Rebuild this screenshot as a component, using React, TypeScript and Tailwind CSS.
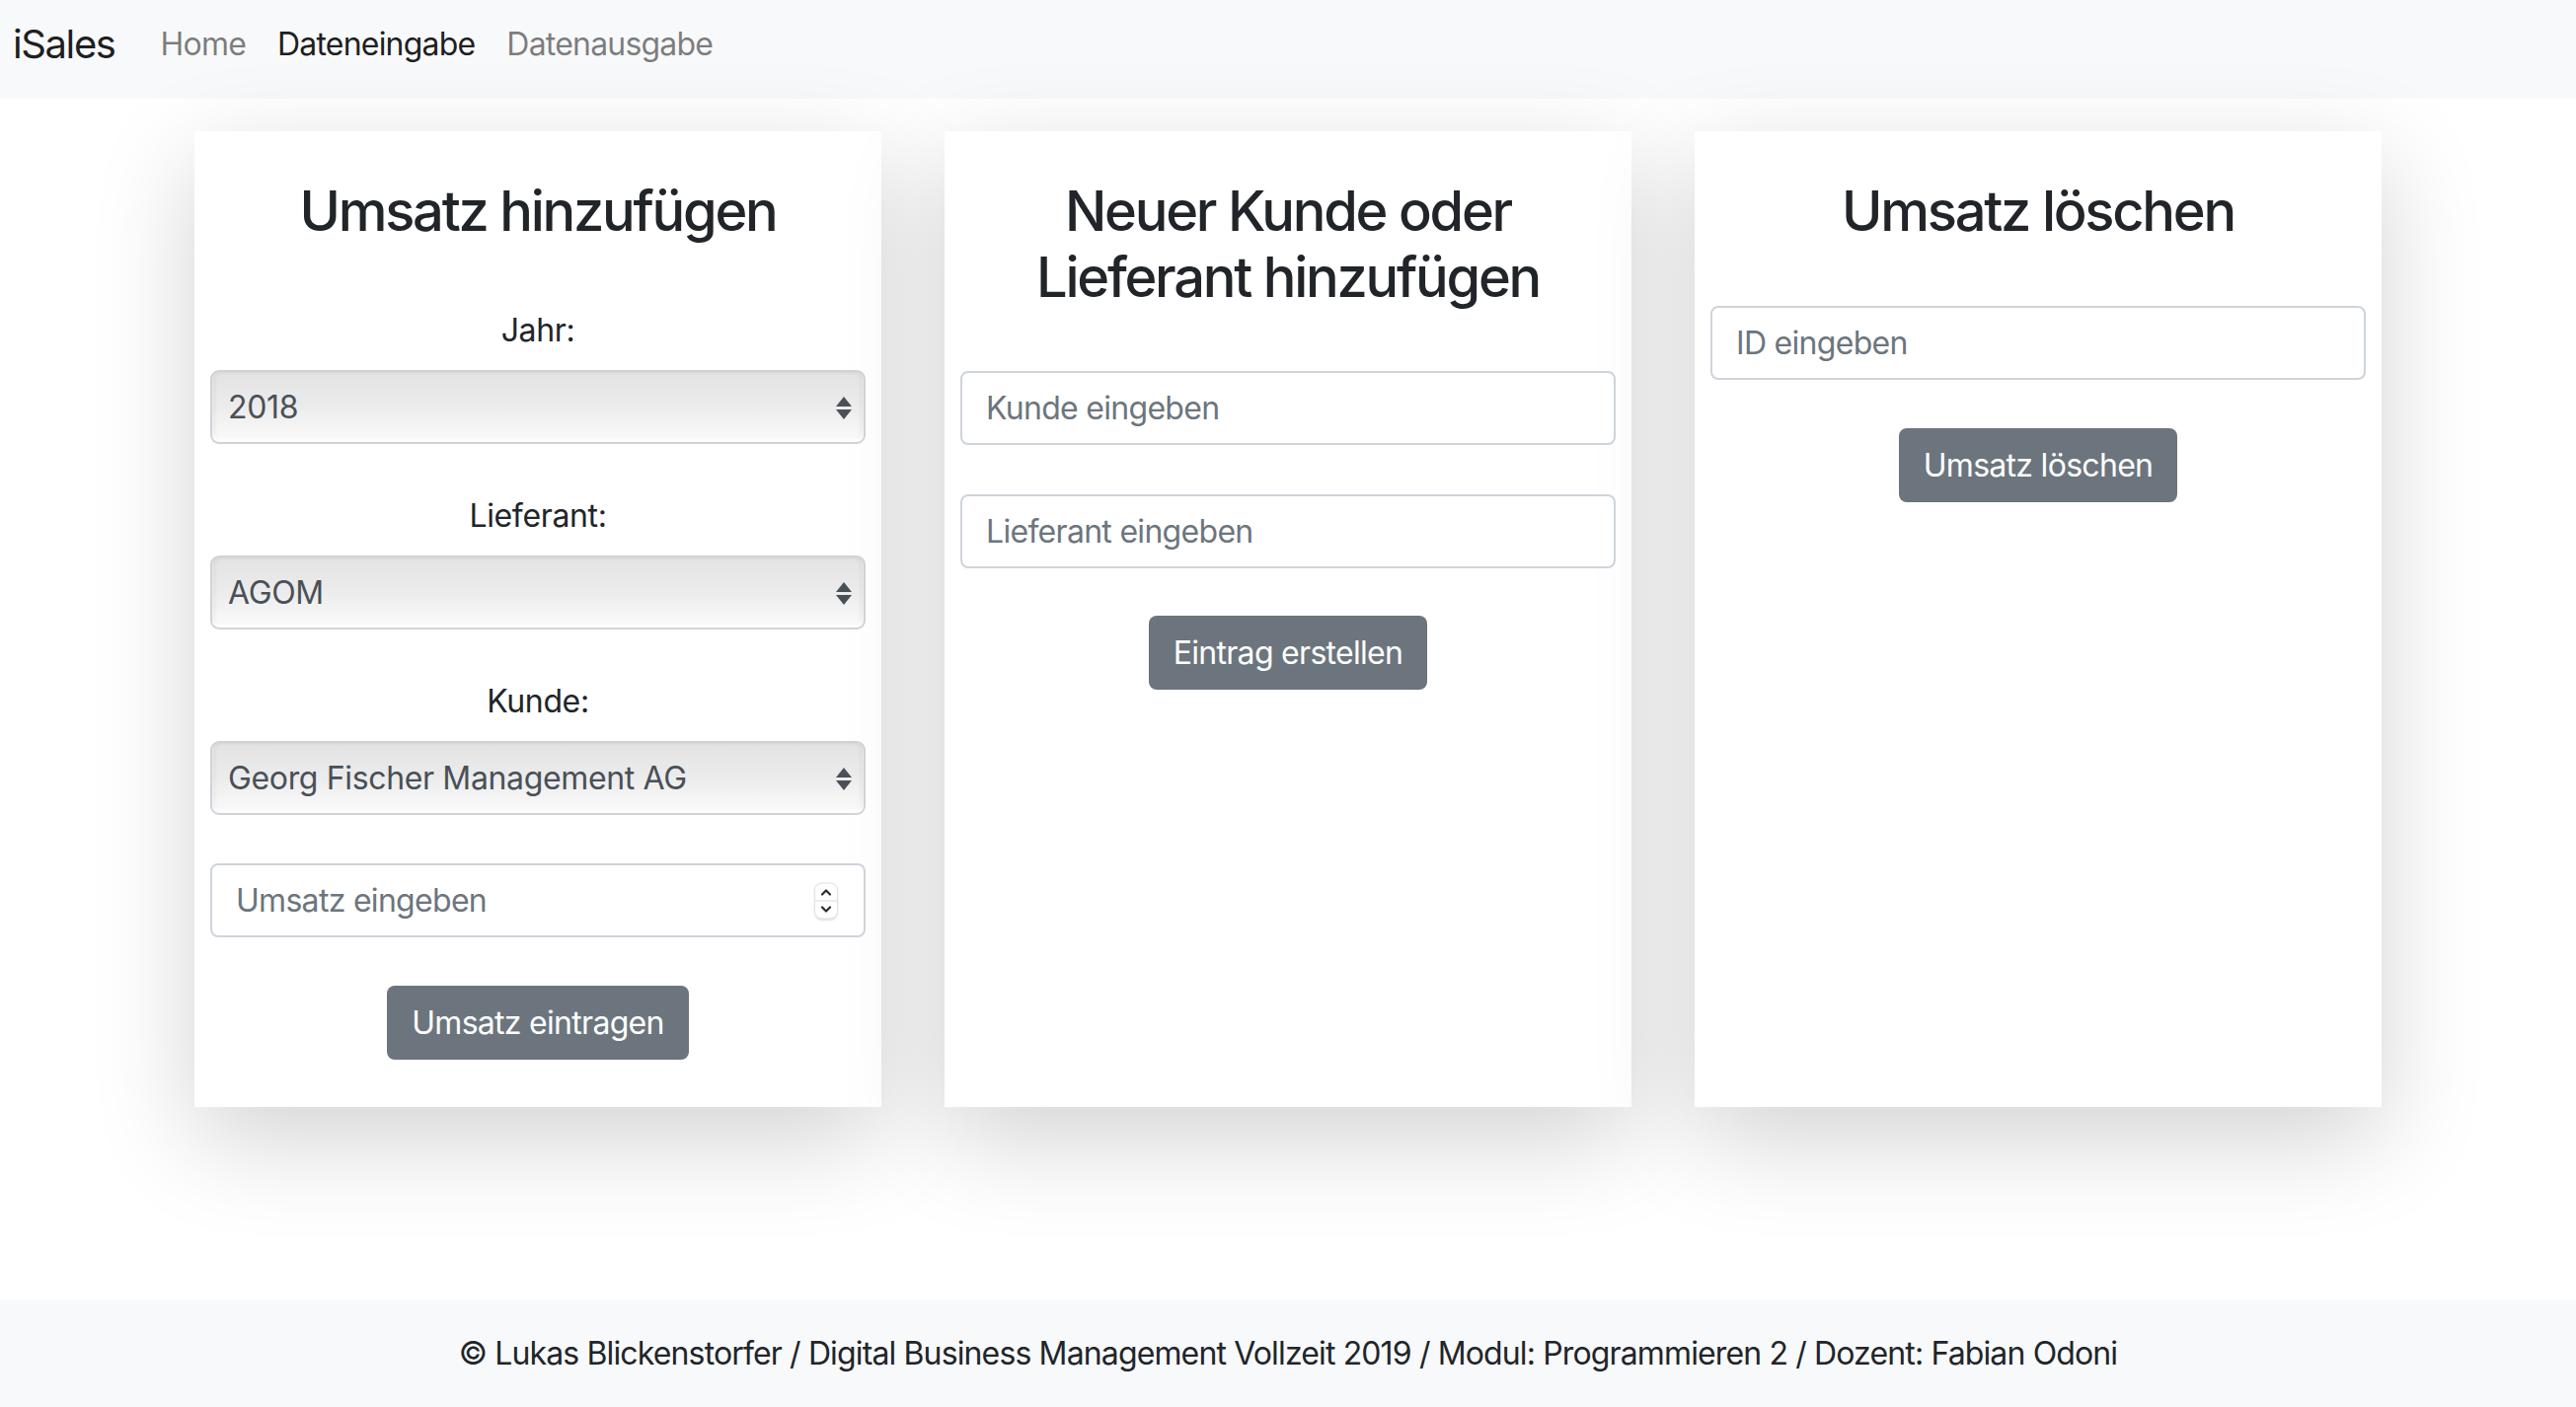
import React from "react";

const font = { fontFamily: "Inter, 'Noto Sans', 'Liberation Sans', sans-serif" };

function SelectBox({ value }: { value: string }) {
  return (
    <div className="relative h-[75px] w-full rounded-[9px] border-2 border-[#cfd3d8] bg-gradient-to-b from-[#e3e3e3] via-[#ececec] to-[#fbfbfb] shadow-[inset_0_-3px_3px_rgba(255,255,255,0.9),inset_3px_0_4px_rgba(0,0,0,0.05),inset_-3px_0_4px_rgba(0,0,0,0.05)] flex items-center pl-[16px] text-[32px] text-[#495057]">
      <span>{value}</span>
      <svg className="absolute right-[11px] top-1/2 -translate-y-1/2" width="18" height="32" viewBox="0 0 18 32">
        <path d="M9 5 L17 15 L1 15 Z" fill="#4b5057" />
        <path d="M1 18 L17 18 L9 28 Z" fill="#4b5057" />
      </svg>
    </div>
  );
}

function TextInput({ placeholder, spinner }: { placeholder: string; spinner?: boolean }) {
  return (
    <div className="relative w-full">
      <input
        type="text"
        placeholder={placeholder}
        className="block h-[75px] w-full rounded-[8px] border-2 border-[#ced4da] bg-white px-[24px] text-[32px] tracking-[-0.022em] text-[#495057] placeholder:text-[#6c757d] outline-none"
        style={font}
      />
      {spinner && (
        <div className="absolute right-[28px] top-1/2 flex h-[37px] w-[24px] -translate-y-1/2 flex-col items-center justify-between rounded-[8px] border border-[#e2e2e2] bg-white shadow-[0_1px_2px_rgba(0,0,0,0.12)]">
          <svg width="14" height="17" viewBox="0 0 14 17">
            <path d="M3 11 L7 7 L11 11" stroke="#2b2b2b" strokeWidth="2.2" fill="none" strokeLinecap="round" strokeLinejoin="round" />
          </svg>
          <div className="h-px w-full bg-[#dcdcdc]" />
          <svg width="14" height="17" viewBox="0 0 14 17">
            <path d="M3 6 L7 10 L11 6" stroke="#2b2b2b" strokeWidth="2.2" fill="none" strokeLinecap="round" strokeLinejoin="round" />
          </svg>
        </div>
      )}
    </div>
  );
}

function Btn({ children }: { children: React.ReactNode }) {
  return (
    <button className="h-[75px] rounded-[8px] bg-[#6c757d] px-[25px] text-[32px] tracking-[-0.022em] text-white" style={font}>
      {children}
    </button>
  );
}

function Label({ children }: { children: React.ReactNode }) {
  return <div className="mb-[16px] text-center text-[32px] leading-[48px] text-[#212529]">{children}</div>;
}

const cardCls =
  "flex h-full flex-col items-center bg-white px-[16px] pt-[48px] pb-[48px] shadow-[0_32px_96px_rgba(0,0,0,0.175)]";
const titleCls = "text-center text-[56px] font-medium leading-[67px] tracking-[-0.04em] text-[#212529]";

export default function App() {
  return (
    <div className="flex h-[1426px] w-full flex-col overflow-hidden bg-white tracking-[-0.022em]" style={font}>
      <nav className="flex h-[100px] shrink-0 items-center bg-[#f8f9fa] pl-[13px] pb-[10px]">
        <span className="mr-[46px] text-[40px] leading-[60px] tracking-[-0.035em] text-[rgba(0,0,0,0.9)]">iSales</span>
        <span className="mr-[32px] text-[32px] tracking-[-0.025em] text-[rgba(0,0,0,0.5)]">Home</span>
        <span className="mr-[32px] text-[32px] tracking-[-0.025em] text-[rgba(0,0,0,0.9)]">Dateneingabe</span>
        <span className="text-[32px] tracking-[-0.025em] text-[rgba(0,0,0,0.5)]">Datenausgabe</span>
      </nav>

      <main className="flex-1">
        <div className="mx-auto mt-[33px] flex w-[2280px]">
          <div className="w-[760px] px-[32px]">
            <div className={cardCls}>
              <h3 className={`mb-[63px] ${titleCls}`}>Umsatz hinzufügen</h3>
              <div className="w-full">
                <Label>Jahr:</Label>
                <SelectBox value="2018" />
              </div>
              <div className="mt-[49px] w-full">
                <Label>Lieferant:</Label>
                <SelectBox value="AGOM" />
              </div>
              <div className="mt-[49px] w-full">
                <Label>Kunde:</Label>
                <SelectBox value="Georg Fischer Management AG" />
              </div>
              <div className="mt-[49px] w-full">
                <TextInput placeholder="Umsatz eingeben" spinner />
              </div>
              <div className="mt-[49px]">
                <Btn>Umsatz eintragen</Btn>
              </div>
            </div>
          </div>

          <div className="w-[760px] px-[32px]">
            <div className={cardCls}>
              <h3 className={`mb-[61px] ${titleCls}`}>
                Neuer Kunde oder
                <br />
                Lieferant hinzufügen
              </h3>
              <TextInput placeholder="Kunde eingeben" />
              <div className="mt-[50px] w-full">
                <TextInput placeholder="Lieferant eingeben" />
              </div>
              <div className="mt-[48px]">
                <Btn>Eintrag erstellen</Btn>
              </div>
            </div>
          </div>

          <div className="w-[760px] px-[32px]">
            <div className={cardCls}>
              <h3 className={`mb-[62px] ${titleCls}`}>Umsatz löschen</h3>
              <TextInput placeholder="ID eingeben" />
              <div className="mt-[49px]">
                <Btn>Umsatz löschen</Btn>
              </div>
            </div>
          </div>
        </div>
      </main>

      <footer className="flex h-[109px] shrink-0 items-center justify-center bg-[#f8f9fa] text-[32px] tracking-[-0.027em] text-[#212529]">
        © Lukas Blickenstorfer / Digital Business Management Vollzeit 2019 / Modul: Programmieren 2 / Dozent: Fabian Odoni
      </footer>
    </div>
  );
}
